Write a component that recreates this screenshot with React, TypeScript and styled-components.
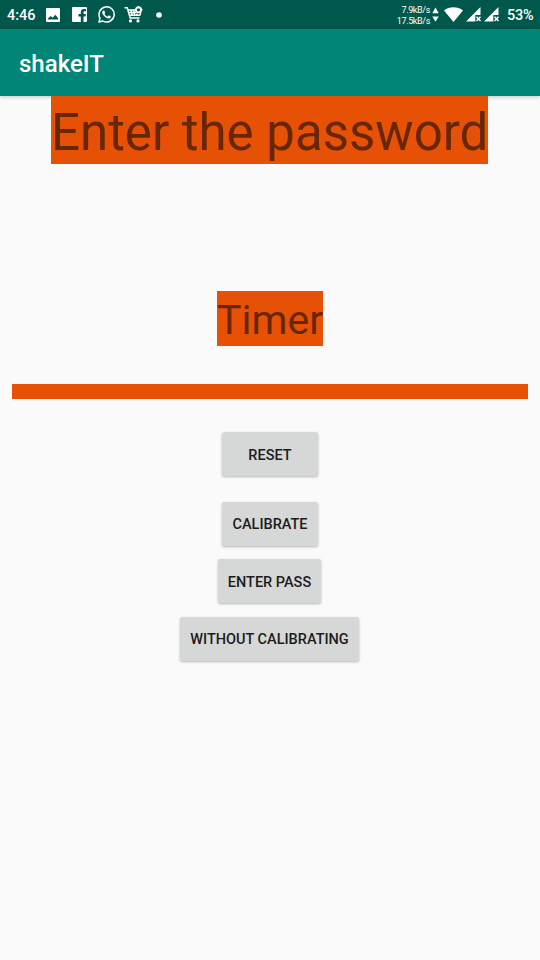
import React from "react";
import styled, { createGlobalStyle } from "styled-components";

const GlobalStyle = createGlobalStyle`
  * { box-sizing: border-box; }
  body { margin: 0; background: #fafafa; font-family: Roboto, sans-serif; }
`;

const Screen = styled.div`
  width: 540px;
  height: 960px;
  display: flex;
  flex-direction: column;
  background: #fafafa;
  overflow: hidden;
`;

const StatusBar = styled.div`
  flex: none;
  height: 29px;
  display: flex;
  align-items: center;
  justify-content: space-between;
  padding: 0 7px;
  background: #00574b;
  color: #fff;
`;

const StatusGroup = styled.div`
  display: flex;
  align-items: center;
`;

const Clock = styled.span`
  width: 38px;
  padding-top: 2px;
  font-size: 14.5px;
  font-weight: 500;
  line-height: 19px;
`;

const Icon = styled.svg<{ $gap?: number }>`
  display: block;
  flex: none;
  margin-left: ${(p) => p.$gap ?? 0}px;
  fill: #fff;
`;

const Speeds = styled.div`
  display: flex;
  flex-direction: column;
  align-items: flex-end;
  padding-top: 2px;
  font-size: 9px;
  letter-spacing: -0.35px;
  line-height: 11px;
`;

const Battery = styled.span`
  margin-left: 8px;
  padding-top: 2px;
  width: 26px;
  font-size: 14.5px;
  font-weight: 500;
  letter-spacing: -0.2px;
  line-height: 19px;
  white-space: nowrap;
`;

const AppBar = styled.header`
  flex: none;
  position: relative;
  height: 67px;
  display: flex;
  align-items: center;
  padding: 2px 19px 0;
  background: #008577;
  box-shadow: 0 1px 4px rgba(0, 0, 0, 0.22);
`;

const Title = styled.h1`
  margin: 0;
  color: #fff;
  font-size: 24px;
  font-weight: 500;
  line-height: 28px;
`;

const Content = styled.main`
  flex: 1;
  display: flex;
  flex-direction: column;
  align-items: center;
`;

const Label = styled.div<{ $width: number; $height: number; $size: number; $inset: number; $top?: number; $shift?: number }>`
  position: relative;
  width: ${(p) => p.$width}px;
  height: ${(p) => p.$height}px;
  margin-top: ${(p) => p.$top ?? 0}px;
  margin-right: ${(p) => p.$shift ?? 0}px;
  padding-top: ${(p) => p.$inset}px;
  background: #e65106;
  color: #682603;
  font-size: ${(p) => p.$size}px;
  line-height: ${(p) => p.$height}px;
  text-align: center;
  white-space: nowrap;
`;

const Bar = styled.div`
  width: 516px;
  height: 15px;
  margin-top: 38px;
  background: #e65106;
`;

const Button = styled.button<{ $width: number; $top: number; $shift?: number; $inset?: number }>`
  width: ${(p) => p.$width}px;
  height: 44px;
  margin: ${(p) => p.$top}px ${(p) => p.$shift ?? 0}px 0 0;
  padding: ${(p) => p.$inset ?? 2}px 0 0;
  border: 0;
  border-radius: 2.5px;
  background: #d6d7d7;
  box-shadow: 0 1px 2.5px rgba(0, 0, 0, 0.28);
  color: #1c1c1c;
  font-family: inherit;
  font-size: 14.5px;
  font-weight: 500;
  line-height: 18px;
  white-space: nowrap;
`;

function SignalIcon() {
  return (
    <Icon $gap={3} width="15" height="15" viewBox="0 0 15 15">
      <path d="M14.500 0v8H9.300v6.500H0z" />
      <path fill="none" stroke="#fff" strokeWidth="1.500" d="M10.500 9.800l4 4.300m0-4.300l-4 4.300" />
    </Icon>
  );
}

export default function App() {
  return (
    <>
      <GlobalStyle />
      <Screen>
        <StatusBar>
          <StatusGroup>
            <Clock>4:46</Clock>
            <Icon $gap={1} width="14" height="14" viewBox="0 0 14 14">
              <path fillRule="evenodd" d="M1 0h12a1 1 0 0 1 1 1v12a1 1 0 0 1-1 1H1a1 1 0 0 1-1-1V1a1 1 0 0 1 1-1zM2 11.600h10V10L9.300 6.800 6.700 9.800 4.700 7.900 2 10.500z" />
            </Icon>
            <Icon $gap={12} width="15" height="15" viewBox="0 0 15 15">
              <path d="M1 0h13a1 1 0 0 1 1 1v13a1 1 0 0 1-1 1h-2.500V9.500h2l.3-2.500h-2.300V5.500c0-.8.3-1.200 1.200-1.200H14V2.100c-.3 0-1-.1-1.800-.1-2.200 0-3.400 1.200-3.400 3.200V7H6.500v2.500h2.300V15H1a1 1 0 0 1-1-1V1a1 1 0 0 1 1-1z" />
            </Icon>
            <Icon $gap={11} width="17" height="17" viewBox="0 0 24 24">
              <path d="M17.472 14.382c-.297-.149-1.758-.867-2.030-.967-.273-.099-.471-.148-.670.150-.197.297-.767.966-.940 1.164-.173.199-.347.223-.644.075-.297-.150-1.255-.463-2.390-1.475-.883-.788-1.480-1.761-1.653-2.059-.173-.297-.018-.458.130-.606.134-.133.298-.347.446-.520.149-.174.198-.298.298-.497.099-.198.050-.371-.025-.520-.075-.149-.669-1.612-.916-2.207-.242-.579-.487-.500-.669-.510-.173-.008-.371-.010-.570-.010-.198 0-.520.074-.792.372-.272.297-1.040 1.016-1.040 2.479 0 1.462 1.065 2.875 1.213 3.074.149.198 2.096 3.200 5.077 4.487.709.306 1.262.489 1.694.625.712.227 1.360.195 1.871.118.571-.085 1.758-.719 2.006-1.413.248-.694.248-1.289.173-1.413-.074-.124-.272-.198-.570-.347" />
              <path fill="none" stroke="#fff" strokeWidth="2.100" strokeLinejoin="round" d="M1.300 22.700l1.500-5.600A10.700 10.700 0 1 1 7 21.300z" />
            </Icon>
            <Icon $gap={9} width="19" height="17" viewBox="0 0 19 17">
              <path fill="none" stroke="#fff" strokeWidth="1.500" d="M.5 1.800h2.700l3 10.200h9.300M3.800 4h7M4.700 6.500H12M5.500 9.300h10.200l1.200-2.800M7 4l1.200 5.300M9.700 4l.9 5.300M13 7.500v2" />
              <circle cx="14.500" cy="3.800" r="2.600" fill="none" stroke="#fff" strokeWidth="1.900" />
              <path d="M13.800 0h1.400v1.500h-1.400zM10.600 3.100h1.400v1.400h-1.400zM17 3.100h1.400v1.400H17z" />
              <circle cx="6.500" cy="14.900" r="1.600" />
              <circle cx="14" cy="14.900" r="1.600" />
            </Icon>
            <Icon $gap={13} width="6" height="6" viewBox="0 0 6 6">
              <circle cx="3" cy="3" r="2.800" />
            </Icon>
          </StatusGroup>
          <StatusGroup>
            <Speeds>
              <span>7.9kB/s</span>
              <span>17.5kB/s</span>
            </Speeds>
            <Icon $gap={2} width="7" height="16" viewBox="0 0 7 16">
              <path d="M3.500 .5l3.200 5.700H.3zM.3 9.500h6.400l-3.200 5.300z" />
            </Icon>
            <Icon $gap={5} width="19" height="15" viewBox="0 0 19 15">
              <path d="M0 3.500C5 -.8 14 -.8 19 3.500L9.500 15z" />
            </Icon>
            <SignalIcon />
            <SignalIcon />
            <Battery>53%</Battery>
          </StatusGroup>
        </StatusBar>
        <AppBar>
          <Title>shakeIT</Title>
        </AppBar>
        <Content>
          <Label $width={437} $height={68} $size={51} $inset={3} $shift={1}>Enter the password</Label>
          <Label $width={106} $height={55} $size={41} $inset={2} $top={127}>Timer</Label>
          <Bar />
          <Button $width={96} $top={33} $inset={3}>RESET</Button>
          <Button $width={96} $top={26}>CALIBRATE</Button>
          <Button $width={103} $top={13} $shift={1} $inset={3}>ENTER PASS</Button>
          <Button $width={179} $top={14} $shift={1}>WITHOUT CALIBRATING</Button>
        </Content>
      </Screen>
    </>
  );
}
